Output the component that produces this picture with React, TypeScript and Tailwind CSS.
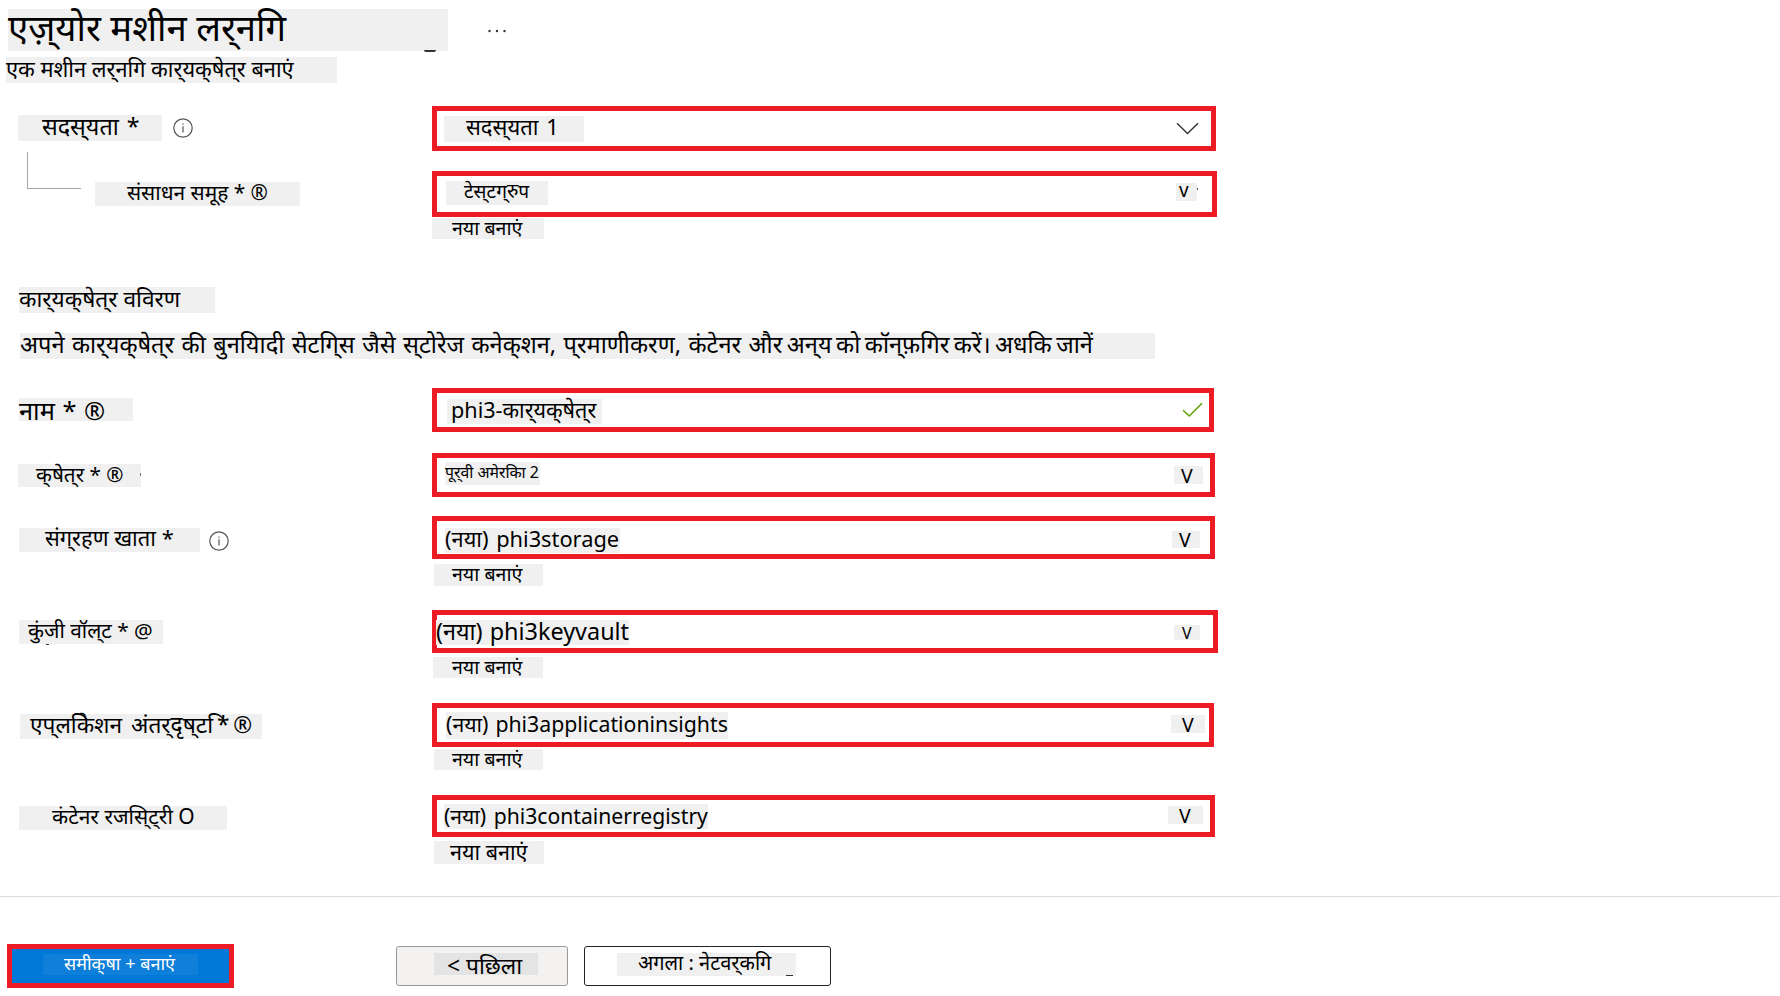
import type { ReactNode } from "react";

function Chip({ className, children }: { className: string; children: ReactNode }) {
  return <div className={`shrink-0 whitespace-nowrap bg-[#f0f0f0] ${className}`}>{children}</div>;
}

function Row({ className, label, children }: { className: string; label: ReactNode; children: ReactNode }) {
  return (
    <div className={`flex items-start ${className}`}>
      <div className="flex w-[432px] shrink-0 items-start">{label}</div>
      <div className="flex flex-col items-start">{children}</div>
    </div>
  );
}

function Field({ className, children }: { className: string; children: ReactNode }) {
  return (
    <div className={`flex items-start justify-between border-5 border-[#ed1c24] bg-white ${className}`}>{children}</div>
  );
}

function InfoIcon({ className }: { className: string }) {
  return (
    <svg className={`h-5 w-5 shrink-0 ${className}`} viewBox="0 0 20 20" fill="none" stroke="#555" strokeWidth="1.2">
      <circle cx="10" cy="10" r="9.2" />
      <path d="M10 8.2V14.5M10 5.4V6.8" />
    </svg>
  );
}

const CREATE = "नया बनाएं";

export default function App() {
  return (
    <div className="h-[996px] w-[1780px] overflow-hidden bg-white pt-[9px] font-['Noto_Sans',sans-serif] text-black">
      <div className="flex items-start">
        <Chip className="relative ml-2 h-[42px] w-[440px] text-[36.5px] leading-[37px]">
          एज़्&zwnj;योर मशीन लर्&zwnj;नगि
          <span className="absolute top-[41px] left-[416px] h-[2px] w-[12px] rounded-b-full bg-[#333]" />
        </Chip>
        <svg className="mt-[19px] ml-[38px] h-[6px] w-6" viewBox="0 0 24 6" fill="#333">
          <circle cx="3.5" cy="3" r="1.2" />
          <circle cx="11" cy="3" r="1.2" />
          <circle cx="18.5" cy="3" r="1.2" />
        </svg>
      </div>
      <Chip className="mt-[6px] ml-[6px] h-[26px] w-[331px] text-[21.8px] leading-[23px]">
        एक मशीन लर्&zwnj;नगि कार्&zwnj;यक्&zwnj;षेत्&zwnj;र बनाएं
      </Chip>

      <Row
        className="mt-[23px] h-[45px]"
        label={
          <>
            <Chip className="mt-[9px] ml-[18px] h-[26px] w-[144px] pl-[24px] text-[23.3px] leading-[23px] [word-spacing:2px]">
              सदस्&zwnj;यता *
            </Chip>
            <InfoIcon className="mt-[12px] ml-[11px]" />
          </>
        }
      >
        <Field className="h-[45px] w-[784px]">
          <Chip className="mt-[5px] ml-[7px] h-[26px] w-[140px] pl-[22px] text-[22px] leading-[20.4px] [word-spacing:2px]">
            सदस्&zwnj;यता 1
          </Chip>
          <svg className="mt-[11px] mr-[12px] h-[13px] w-[23px]" viewBox="0 0 23 13" fill="none" stroke="#333" strokeWidth="1.4">
            <path d="M1 1.2L11.5 11.5L22 1.2" />
          </svg>
        </Field>
      </Row>

      <Row
        className="mt-5 h-[68px]"
        label={
          <>
            <div className="-mt-[19px] ml-[27px] h-[37px] w-[54px] border-b border-l border-[#a6a6a6]" />
            <Chip className="mt-[11px] ml-[14px] h-[24px] w-[205px] pl-[32px] text-[20.9px] leading-[20px]">
              संसाधन समूह * ®
            </Chip>
          </>
        }
      >
        <Field className="h-[46px] w-[785px]">
          <Chip className="mt-[5px] ml-[9px] h-[24px] w-[102px] pl-[18px] text-[19.1px] leading-[21px]">
            टेस्&zwnj;टग्&zwnj;रुप
          </Chip>
          <Chip className="relative mt-[7px] mr-[15px] h-[18px] w-[21px] pl-[3px] text-[19px] leading-[14px]">
            v<span className="absolute top-[5px] left-[21px] h-[2px] w-px bg-[#555]" />
          </Chip>
        </Field>
        <Chip className="mt-px h-[21px] w-[112px] pl-[20px] text-[19.6px] leading-[19px]">{CREATE}</Chip>
      </Row>

      <Chip className="mt-12 ml-[19px] h-[26px] w-[196px] text-[22.7px] leading-[23px]">
        कार्&zwnj;यक्&zwnj;षेत्&zwnj;र वविरण
      </Chip>
      <Chip className="mt-5 ml-[20px] h-[26px] w-[1135px] text-[23.57px] leading-[22.4px]">
        <span className="[word-spacing:1.3px]">
          अपने कार्&zwnj;यक्&zwnj;षेत्&zwnj;र की बुनयिादी सेटगि्&zwnj;स जैसे स्&zwnj;टोरेज कनेक्&zwnj;शन,
          प्&zwnj;रमाणीकरण, कंटेनर और
        </span>
        <span className="[word-spacing:-1.6px]">
          {" "}
          अन्&zwnj;य को कॉन्&zwnj;फ़गिर करें। अधकि जानें
        </span>
      </Chip>

      <Row
        className="mt-[29px] h-[44px]"
        label={
          <Chip className="mt-[10px] ml-[19px] h-[23px] w-[114px] text-[25.4px] leading-[25px] [word-spacing:1px]">
            नाम * ®
          </Chip>
        }
      >
        <Field className="h-[44px] w-[782px]">
          <Chip className="mt-[6px] ml-[10px] h-[25px] w-[155px] pl-[4px] text-[21.6px] leading-[21px]">
            phi3-कार्&zwnj;यक्&zwnj;षेत्&zwnj;र
          </Chip>
          <svg className="mt-[9px] mr-[6px] h-[16px] w-[21px]" viewBox="0 0 21 16" fill="none" stroke="#57a300" strokeWidth="1.5">
            <path d="M1 8.2L7.3 14L20 1.2" />
          </svg>
        </Field>
      </Row>

      <Row
        className="mt-[21px] h-[44px]"
        label={
          <Chip className="relative mt-[11px] ml-[18px] h-[23px] w-[123px] pl-[18px] text-[20.7px] leading-[21.3px]">
            क्&zwnj;षेत्&zwnj;र * ®
            <span className="absolute top-[9px] left-[122px] h-[3px] w-px bg-[#777]" />
          </Chip>
        }
      >
        <Field className="h-[44px] w-[783px]">
          <Chip className="mt-[4px] ml-[8px] h-[23px] w-[95px] text-[15.8px] leading-[20.3px]">
            पूर्&zwnj;वी अमेरकिा 2
          </Chip>
          <Chip className="mt-[8px] mr-[7px] h-[18px] w-[29px] pl-[7px] text-[19.5px] leading-[20.4px]">V</Chip>
        </Field>
      </Row>

      <Row
        className="mt-[19px] h-[70px]"
        label={
          <>
            <Chip className="mt-[12px] ml-[19px] h-[24px] w-[181px] pl-[26px] text-[21.9px] leading-[20px]">
              संग्&zwnj;रहण खाता *
            </Chip>
            <InfoIcon className="mt-[15px] ml-[9px]" />
          </>
        }
      >
        <Field className="h-[43px] w-[783px]">
          <Chip className="mt-[7px] ml-[8px] h-[25px] w-[175px] text-[21.8px] leading-[22px] [word-spacing:2px]">
            (नया) phi3storage
          </Chip>
          <Chip className="mt-[10px] mr-[10px] h-[17px] w-[28px] pl-[7px] text-[19.5px] leading-[18.9px]">V</Chip>
        </Field>
        <Chip className="mt-[5px] ml-[2px] h-[22px] w-[109px] pl-[18px] text-[19.6px] leading-[19px]">{CREATE}</Chip>
      </Row>

      <Row
        className="mt-6 h-[68px]"
        label={
          <Chip className="relative mt-[10px] ml-[19px] h-[24px] w-[144px] pl-[9px] text-[20.8px] leading-[20.5px]">
            कुंजी वॉल्&zwnj;ट * @
            <span className="absolute top-[24px] left-[27px] h-px w-[3px] bg-[#333]" />
          </Chip>
        }
      >
        <Field className="h-[43px] w-[786px]">
          <Chip className="mt-[5px] -ml-px h-[25px] w-[193px] text-[23.4px] leading-[22.4px] [word-spacing:1px]">
            (नया) phi3keyvault
          </Chip>
          <Chip className="mt-[10px] mr-[13px] h-[15px] w-[26px] pl-[8px] text-[16px] leading-[17.4px]">V</Chip>
        </Field>
        <Chip className="mt-[4px] ml-px h-[21px] w-[110px] pl-[19px] text-[19.6px] leading-[19.5px]">{CREATE}</Chip>
      </Row>

      <Row
        className="mt-[25px] h-[67px]"
        label={
          <Chip className="mt-[11px] ml-[20px] h-[25px] w-[242px] pl-[10px] text-[22.7px] leading-[21.6px]">
            <span className="[word-spacing:3px]">एप्&zwnj;लकिेशन </span>
            <span className="[word-spacing:-2px]">अंतर्&zwnj;दृष्&zwnj;ट&nbsp;ि* ®</span>
          </Chip>
        }
      >
        <Field className="h-[44px] w-[782px]">
          <Chip className="mt-[4px] ml-[9px] h-[27px] w-[282px] text-[21.25px] leading-[24px] [word-spacing:1.5px]">
            (नया) phi3applicationinsights
          </Chip>
          <Chip className="mt-[7px] mr-[4px] h-[18px] w-[34px] pl-[11px] text-[19.5px] leading-[20.4px]">V</Chip>
        </Field>
        <Chip className="mt-[2px] ml-[2px] h-[21px] w-[109px] pl-[18px] text-[19.6px] leading-[19px]">{CREATE}</Chip>
      </Row>

      <Row
        className="mt-[25px] h-[69px]"
        label={
          <Chip className="mt-[11px] ml-[19px] h-[24px] w-[208px] pl-[33px] text-[21px] leading-[21.7px]">
            कंटेनर रजसि्&zwnj;ट्&zwnj;री O
          </Chip>
        }
      >
        <Field className="h-[42px] w-[783px]">
          <Chip className="mt-[4px] ml-[7px] h-[25px] w-[264px] text-[21.15px] leading-[24px] [word-spacing:2px]">
            (नया) phi3containerregistry
          </Chip>
          <Chip className="mt-[6px] mr-[7px] h-[18px] w-[35px] pl-[11px] text-[19.5px] leading-[20.4px]">V</Chip>
        </Field>
        <Chip className="mt-[4px] ml-[2px] h-[23px] w-[110px] pl-[16px] text-[21.6px] leading-[21.4px]">{CREATE}</Chip>
      </Row>

      <div className="mt-8 h-px bg-[#dcdcdc]" />

      <div className="mt-[47px] flex items-start">
        <button className="ml-[7px] flex h-[44px] w-[227px] items-start border-5 border-[#ed1c24] bg-[#0078d7] text-left text-white">
          <span className="mt-[5px] ml-[31px] h-[21px] w-[155px] bg-[#0f7fd9] pl-[21px] text-[18px] leading-[18.6px] whitespace-nowrap">
            समीक्&zwnj;षा + बनाएं
          </span>
        </button>
        <button className="mt-[2px] ml-[162px] flex h-[40px] w-[172px] items-start rounded-[3px] border border-[#999] bg-[#f3f2f1] text-left">
          <span className="mt-[6px] ml-[37px] h-[22px] w-[104px] bg-[#e4e4e4] pl-[13px] text-[22.8px] leading-[26px] whitespace-nowrap">
            &lt; पछिला
          </span>
        </button>
        <button className="mt-[2px] ml-[16px] flex h-[40px] w-[247px] items-start rounded-[3px] border border-[#222] bg-white text-left">
          <span className="relative mt-[6px] ml-[32px] h-[23px] w-[179px] bg-[#f0f0f0] pl-[21px] text-[20px] leading-[19px] whitespace-nowrap">
            अगला : नेटवर्&zwnj;कगि
            <span className="absolute top-[22px] left-[169px] h-px w-[7px] bg-[#333]" />
          </span>
        </button>
      </div>
    </div>
  );
}
